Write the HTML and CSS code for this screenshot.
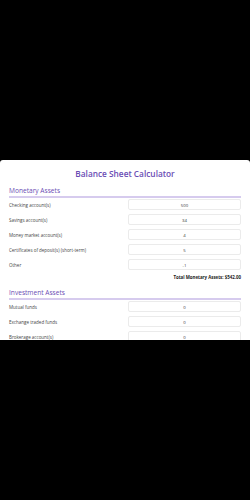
FILE: index.html
```html
<!DOCTYPE html>
<html lang="en">
<head>
  <meta charset="UTF-8" />
  <meta name="viewport" content="width=device-width, initial-scale=1.0" />
  <title>Balance Sheet Calculator</title>
  <link rel="stylesheet" href="styles.css">
</head>
<body>
  <div class="sheet">
    <h1>Balance Sheet Calculator</h1>

    <div class="section">
      <h2>Monetary Assets</h2>
      <div class="row"><label>Checking account(s)</label><input type="text" value="500"></div>
      <div class="row"><label>Savings account(s)</label><input type="text" value="34"></div>
      <div class="row"><label>Money market account(s)</label><input type="text" value="4"></div>
      <div class="row"><label>Certificates of deposit(s) (short-term)</label><input type="text" value="5"></div>
      <div class="row"><label>Other</label><input type="text" value="-1"></div>
      <div class="total">Total Monetary Assets: $542.00</div>
    </div>

    <div class="section">
      <h2>Investment Assets</h2>
      <div class="row"><label>Mutual funds</label><input type="text" value="0"></div>
      <div class="row"><label>Exchange traded funds</label><input type="text" value="0"></div>
      <div class="row"><label>Brokerage account(s)</label><input type="text" value="0"></div>
    </div>
  </div>
</body>
</html>
```

FILE: styles.css
```css
* {
  margin: 0;
  padding: 0;
  box-sizing: border-box;
}

body {
  background: #000;
  font-family: 'Open Sans', 'Noto Sans', sans-serif;
  height: 500px;
  overflow: hidden;
  padding-top: 160px;
}

.sheet {
  background: #fff;
  height: 180px;
  overflow: hidden;
  border-radius: 3px 3px 0 0;
  padding: 8px 9px 0;
}

h1 {
  text-align: center;
  color: #6a4cb4;
  font-size: 8.3px;
  font-weight: 600;
  line-height: 12px;
  margin-bottom: 6px;
}

h2 {
  color: #6a4cb4;
  font-size: 6.6px;
  font-weight: 400;
  line-height: 10px;
  border-bottom: 2px solid #d6cbee;
  margin-bottom: 1px;
}

.row {
  display: flex;
  align-items: center;
  height: 11px;
  margin-bottom: 4px;
}

.row label {
  flex: 1;
  font-size: 4.5px;
  color: #444;
}

.row input {
  width: 113px;
  height: 11px;
  border: 1px solid #ebebeb;
  border-radius: 2px;
  text-align: center;
  font-family: inherit;
  font-size: 4.3px;
  color: #333;
  outline: none;
}

.total {
  text-align: right;
  font-size: 4.4px;
  font-weight: 700;
  color: #222;
  line-height: 6px;
  margin-top: 1px;
  margin-bottom: 8px;
}

.section:last-child h2 {
  margin-bottom: 1px;
}
```
